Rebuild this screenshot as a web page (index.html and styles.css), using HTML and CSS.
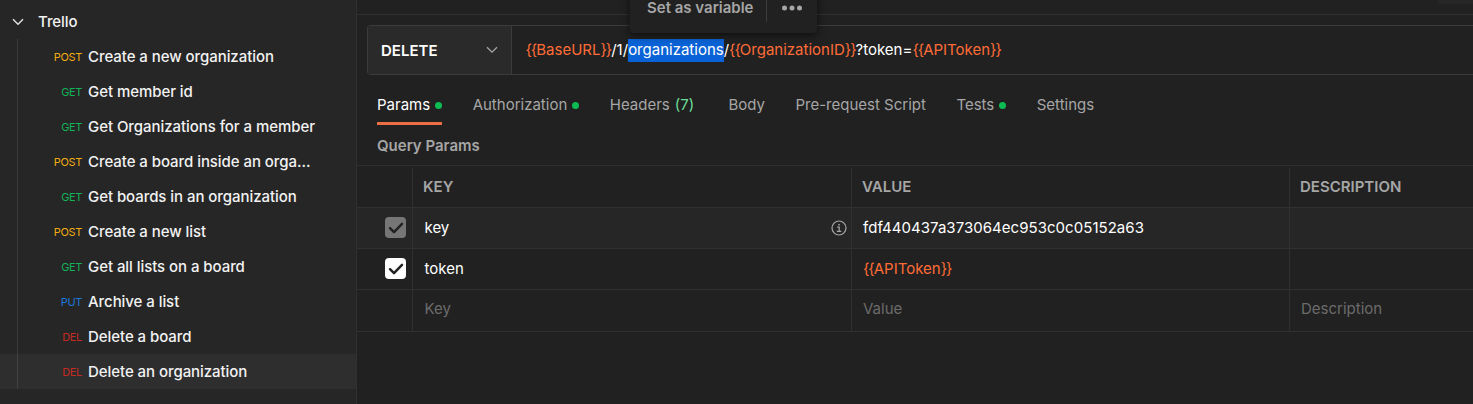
FILE: index.html
```html
<!DOCTYPE html>
<html lang="en">
<head>
<meta charset="utf-8">
<title>Trello – Delete an organization</title>
<link rel="stylesheet" href="styles.css">
</head>
<body>
<div class="app">
  <aside class="sidebar">
    <div class="folder">
      <svg class="folder-arrow" width="12" height="8" viewBox="0 0 12 8"><path d="M1 1.2 6 6.2 11 1.2"/></svg>
      <span>Trello</span>
    </div>
    <ul class="requests">
      <li class="request"><span class="verb post">POST</span><span class="name">Create a new organization</span></li>
      <li class="request"><span class="verb get">GET</span><span class="name">Get member id</span></li>
      <li class="request"><span class="verb get">GET</span><span class="name">Get Organizations for a member</span></li>
      <li class="request"><span class="verb post">POST</span><span class="name">Create a board inside an orga...</span></li>
      <li class="request"><span class="verb get">GET</span><span class="name">Get boards in an organization</span></li>
      <li class="request"><span class="verb post">POST</span><span class="name">Create a new list</span></li>
      <li class="request"><span class="verb get">GET</span><span class="name">Get all lists on a board</span></li>
      <li class="request"><span class="verb put">PUT</span><span class="name">Archive a list</span></li>
      <li class="request"><span class="verb del">DEL</span><span class="name">Delete a board</span></li>
      <li class="request active"><span class="verb del">DEL</span><span class="name">Delete an organization</span></li>
    </ul>
  </aside>
  <main class="main">
    <div class="topbar"><div class="topbar-button"></div></div>
    <div class="urlbar">
      <div class="method"><span>DELETE</span>
        <svg class="method-arrow" width="12" height="8" viewBox="0 0 12 8"><path d="M1 1.2 6 6.2 11 1.2"/></svg>
      </div>
      <div class="url"><span class="var"><b>{{</b>BaseURL<b>}}</b></span><span>/1/</span><span class="selected">organizations</span><span>/</span><span class="var"><b>{{</b>OrganizationID<b>}}</b></span><span>?token=</span><span class="var"><b>{{</b>APIToken<b>}}</b></span></div>
    </div>
    <nav class="tabs">
      <div class="tab current">Params<i class="dot"></i></div>
      <div class="tab">Authorization<i class="dot"></i></div>
      <div class="tab">Headers<span class="count">(7)</span></div>
      <div class="tab">Body</div>
      <div class="tab">Pre-request Script</div>
      <div class="tab">Tests<i class="dot"></i></div>
      <div class="tab">Settings</div>
    </nav>
    <h2 class="section-title">Query Params</h2>
    <div class="table">
      <div class="row head"><div class="cell check"></div><div class="cell">KEY</div><div class="cell">VALUE</div><div class="cell">DESCRIPTION</div></div>
      <div class="row locked">
        <div class="cell check"><span class="box off"><svg width="16" height="14" viewBox="0 0 16 14"><path d="M2 7.2 6 11.2 14 2.8"/></svg></span></div>
        <div class="cell"><span>key</span>
          <svg class="info" width="16" height="16" viewBox="0 0 16 16"><circle cx="8" cy="8" r="7"/><path d="M6.2 7.2H8.2V11.3M5.8 11.4H10.3"/><path class="info-dot" d="M7.3 4.1H8.8V5.5H7.3Z"/></svg>
        </div>
        <div class="cell hash">fdf440437a373064ec953c0c05152a63</div><div class="cell"></div>
      </div>
      <div class="row">
        <div class="cell check"><span class="box"><svg width="16" height="14" viewBox="0 0 16 14"><path d="M2 7.2 6 11.2 14 2.8"/></svg></span></div>
        <div class="cell">token</div><div class="cell value"><span class="var"><b>{{</b>APIToken<b>}}</b></span></div><div class="cell"></div>
      </div>
      <div class="row blank"><div class="cell check"></div><div class="cell">Key</div><div class="cell value">Value</div><div class="cell value">Description</div></div>
    </div>
  </main>
  <div class="popover"><span>Set as variable</span><i class="popover-rule"></i>
    <svg class="more" width="20" height="6" viewBox="0 0 20 6"><circle cx="2.5" cy="3" r="2.5"/><circle cx="10" cy="3" r="2.5"/><circle cx="17.5" cy="3" r="2.5"/></svg>
  </div>
</div>
</body>
</html>
```
FILE: styles.css
```css
* { box-sizing: border-box; }
body {
  margin: 0;
  background: #212121;
  color: #fff;
  font: 15px/20px Inter, "Liberation Sans", sans-serif;
  overflow: hidden;
}
.app {
  position: relative;
  display: flex;
  height: 404px;
  overflow: hidden;
}

/* Sidebar */
.sidebar {
  flex: none;
  width: 357px;
  padding-top: 4px;
  background: #262626;
  border-right: 1px solid #303030;
  color: #f2f2f2;
  font-weight: 500;
  letter-spacing: -.06px;
}
.folder {
  display: flex;
  align-items: center;
  gap: 14px;
  height: 35px;
  padding-left: 12px;
}
.folder-arrow, .method-arrow { fill: none; stroke: #e0e0e0; stroke-width: 1.5; }
.requests {
  margin: 0;
  padding: 0;
  list-style: none;
  background: linear-gradient(#3a3a3a, #3a3a3a) 17px 0 / 1px 100% no-repeat;
}
.request {
  display: flex;
  align-items: center;
  gap: 6px;
  height: 35px;
}
.request.active { background-color: rgba(255, 255, 255, .04); }
.verb {
  width: 82px;
  text-align: right;
  font-size: 11px;
  font-weight: 400;
  letter-spacing: -.35px;
}
.post { color: #f0ad12; }
.get { color: #14b258; }
.put { color: #1a78de; }
.del { color: #c42a22; }

/* Request pane */
.main { flex: 1; min-width: 0; }
.topbar {
  display: flex;
  justify-content: flex-end;
  height: 15px;
  border-bottom: 1px solid #303030;
}
.topbar-button {
  width: 36px;
  height: 4px;
  background: #262626;
  border-bottom-left-radius: 4px;
}
.urlbar {
  display: flex;
  height: 50px;
  margin: 10px 0 0 10px;
  border: 1px solid #3b3b3b;
  border-right: 0;
  border-radius: 4px 0 0 4px;
}
.method {
  display: flex;
  align-items: center;
  justify-content: space-between;
  width: 144px;
  padding: 0 13px;
  background: #2a2a2a;
  border-right: 1px solid #3b3b3b;
  font-weight: 600;
}
.method span { padding-top: 1px; }
.method-arrow { stroke: #a6a6a6; stroke-width: 1.3; }
.url {
  display: flex;
  align-items: center;
  padding-left: 13.5px;
  white-space: pre;
}
.url > span { height: 23px; line-height: 22px; }
.var { color: #ff6c37; }
.var b { font-weight: 400; letter-spacing: -1.02px; }
.selected { background: #0a63d6; }
.tabs {
  display: flex;
  gap: 30.5px;
  height: 50px;
  padding-left: 20px;
  color: #a6a6a6;
}
.tab {
  display: flex;
  align-items: center;
  height: 50px;
  padding-top: 10px;
}
.current {
  color: #fff;
  border-bottom: 3px solid #eb6f45;
  padding-top: 13px;
}
.dot {
  width: 7px;
  height: 7px;
  margin-left: 5px;
  border-radius: 50%;
  background: #0cbb52;
}
.count { margin: 0 3.8px 0 5px; color: #6bdd9a; }
.section-title {
  margin: 0;
  padding: 11px 0 9px 20px;
  height: 40px;
  color: #a6a6a6;
  font-size: 15px;
  font-weight: 600;
}

/* Parameter table */
.table { border-top: 1px solid #303030; }
.row {
  display: grid;
  grid-template-columns: 56px 439px 438px 1fr;
  height: 41px;
  border-bottom: 1px solid #303030;
}
.cell {
  display: flex;
  align-items: center;
  justify-content: space-between;
  padding-left: 11.5px;
  border-right: 1px solid #303030;
}
.cell:last-child { border-right: 0; }
.value { padding-left: 11px; }
.head {
  height: 42px;
  color: #a6a6a6;
  font-weight: 600;
}
.head .cell { padding-left: 10px; margin-top: 2px; padding-bottom: 2px; }
.hash { padding-left: 11px; letter-spacing: .04px; }
.locked { background: #262626; }
.blank { height: 42px; color: #6b6b6b; }
.blank .cell { padding-bottom: 4px; }
.row .check { justify-content: flex-end; padding: 0 6px 1px 0; }
.box {
  display: flex;
  align-items: center;
  justify-content: center;
  width: 21px;
  height: 21px;
  border-radius: 4px;
  background: #fff;
}
.box.off { background: #767676; }
.box path { fill: none; stroke: #212121; stroke-width: 2.4; stroke-linecap: round; stroke-linejoin: round; }
.info { margin-right: 4px; fill: none; stroke: #a6a6a6; stroke-width: 1.2; }
.info-dot { fill: #a6a6a6; stroke: none; }

/* Selection popover, floating above the URL field */
.popover {
  position: absolute;
  left: 630px;
  top: -18px;
  display: flex;
  align-items: center;
  width: 187px;
  height: 51px;
  padding-left: 17px;
  background: #212121;
  border-radius: 4px;
  box-shadow: 0 2px 8px rgba(0, 0, 0, .6);
  color: #a6a6a6;
  font-weight: 600;
}
.popover-rule { width: 1px; height: 28px; margin: 0 15px 0 13px; background: #3b3b3b; }
.more { fill: #a6a6a6; }
```
